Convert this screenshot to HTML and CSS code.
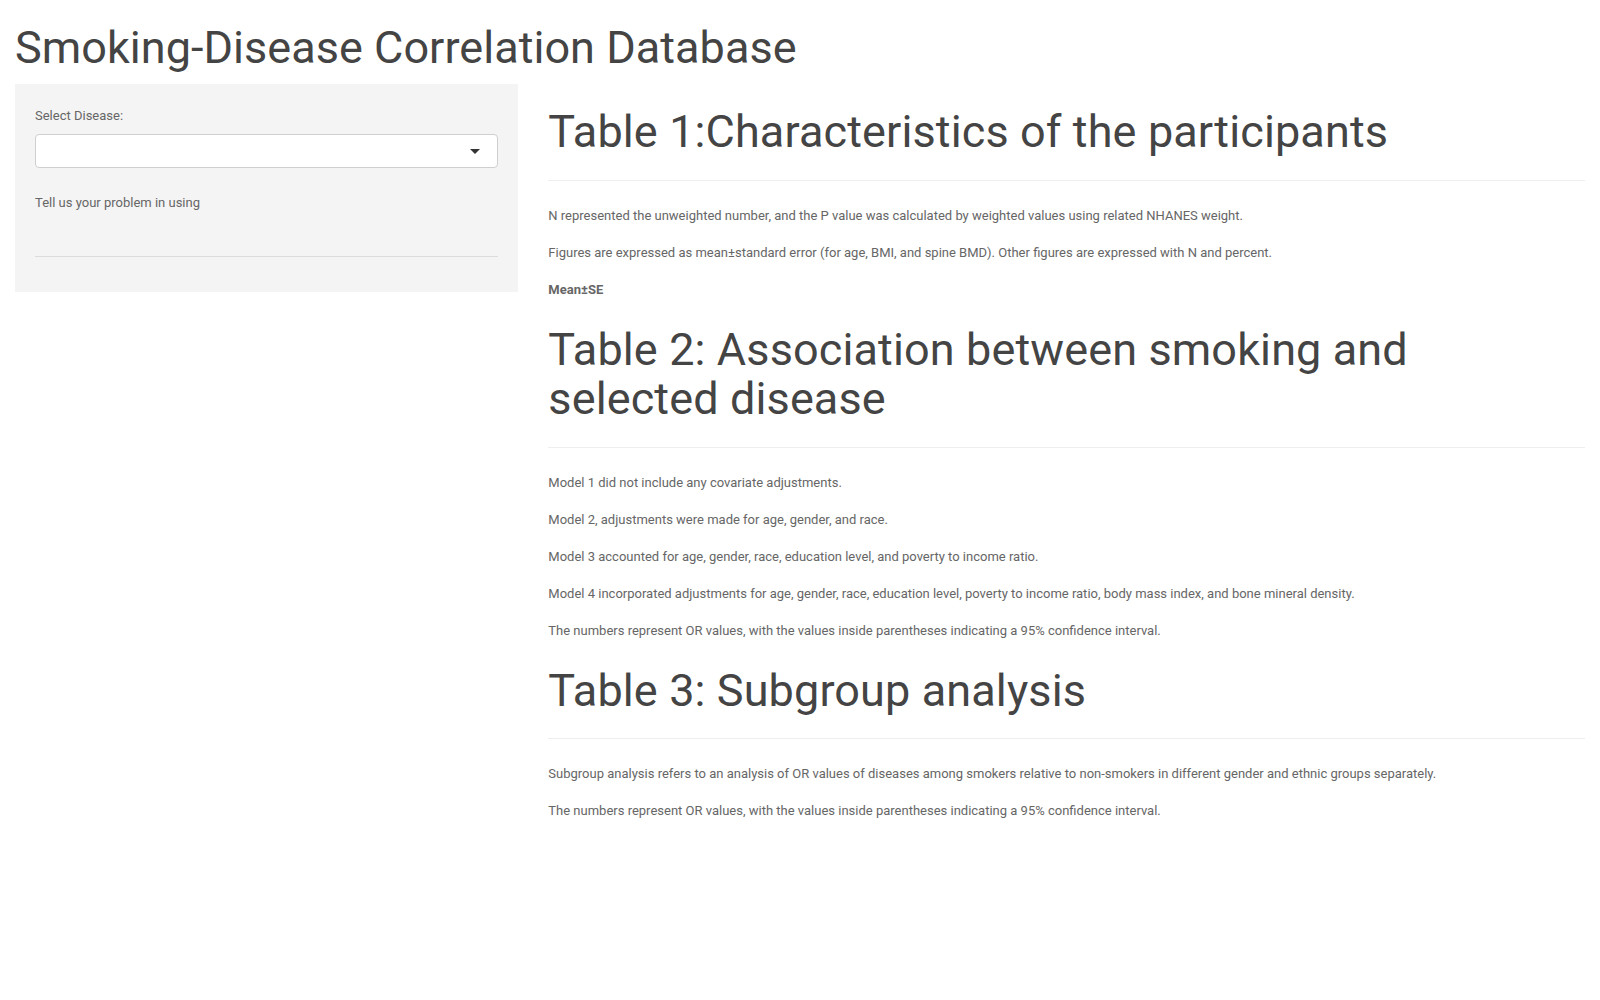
FILE: index.html
```html
<!DOCTYPE html>
<html lang="en">
<head>
<meta charset="utf-8">
<title>Smoking-Disease Correlation Database</title>
<link rel="stylesheet" href="styles.css">
</head>
<body>
<div class="container">
  <h2 class="page-title">Smoking-Disease Correlation Database</h2>
  <div class="row">
    <div class="col-side">
      <form class="well">
        <div class="form-group">
          <label class="control-label">Select Disease:</label>
          <div class="select-box"><span class="caret"></span></div>
        </div>
        <p class="side-text">Tell us your problem in using</p>
        <hr class="side-hr">
      </form>
    </div>
    <div class="col-main">
      <h2 class="section-title">Table 1:Characteristics of the participants</h2>
      <hr class="rule">
      <p>N represented the unweighted number, and the P value was calculated by weighted values using related NHANES weight.</p>
      <p>Figures are expressed as mean±standard error (for age, BMI, and spine BMD). Other figures are expressed with N and percent.</p>
      <p><strong>Mean±SE</strong></p>
      <h2 class="section-title">Table 2: Association between smoking and selected disease</h2>
      <hr class="rule">
      <p>Model 1 did not include any covariate adjustments.</p>
      <p>Model 2, adjustments were made for age, gender, and race.</p>
      <p>Model 3 accounted for age, gender, race, education level, and poverty to income ratio.</p>
      <p>Model 4 incorporated adjustments for age, gender, race, education level, poverty to income ratio, body mass index, and bone mineral density.</p>
      <p>The numbers represent OR values, with the values inside parentheses indicating a 95% confidence interval.</p>
      <h2 class="section-title">Table 3: Subgroup analysis</h2>
      <hr class="rule">
      <p>Subgroup analysis refers to an analysis of OR values of diseases among smokers relative to non-smokers in different gender and ethnic groups separately.</p>
      <p>The numbers represent OR values, with the values inside parentheses indicating a 95% confidence interval.</p>
    </div>
  </div>
</div>
</body>
</html>
```

FILE: styles.css
```css
* {
  box-sizing: border-box;
}

html, body {
  margin: 0;
  padding: 0;
  background: #fff;
}

body {
  font-family: Roboto, "Helvetica Neue", "Liberation Sans", Arial, sans-serif;
  font-size: 13px;
  line-height: 24px;
  color: #666;
}

.container {
  padding: 0 15px;
}

h2 {
  font-family: Roboto, "Helvetica Neue", "Liberation Sans", Arial, sans-serif;
  font-weight: 400;
  font-size: 45px;
  line-height: 1.1;
  color: #444;
  margin: 23px 0 11.5px;
}

.page-title {
  letter-spacing: 0.04px;
}

.section-title {
  letter-spacing: 0.12px;
}

.row {
  display: flex;
  margin: 0 -15px;
}

.col-side {
  width: 33.3333%;
  padding: 0 15px;
  flex: none;
}

.col-main {
  width: 66.6667%;
  padding: 0 15px;
  flex: none;
}

.well {
  background: #f4f4f4;
  padding: 20px 20px 1px;
  margin: 0 0 20px;
}

.form-group {
  margin-bottom: 23px;
}

.control-label {
  display: inline-block;
  font-weight: 400;
  margin-bottom: 6px;
}

.select-box {
  position: relative;
  height: 34px;
  background: #fff;
  border: 1px solid #cfcfcf;
  border-radius: 4px;
}

.caret {
  position: absolute;
  right: 17px;
  top: 14px;
  width: 0;
  height: 0;
  border-style: solid;
  border-width: 5px 5px 0 5px;
  border-color: #333 transparent transparent transparent;
}

.side-text {
  margin: 0 0 41px;
}

.side-hr {
  border: 0;
  border-top: 1px solid #dcdcdc;
  margin: 0 0 34px;
}

.col-main p {
  margin: 0 0 13px;
}

.col-main strong {
  font-weight: 700;
  color: #666;
}

.rule {
  border: 0;
  border-top: 1px solid #eee;
  margin: 23px 0;
}
```
